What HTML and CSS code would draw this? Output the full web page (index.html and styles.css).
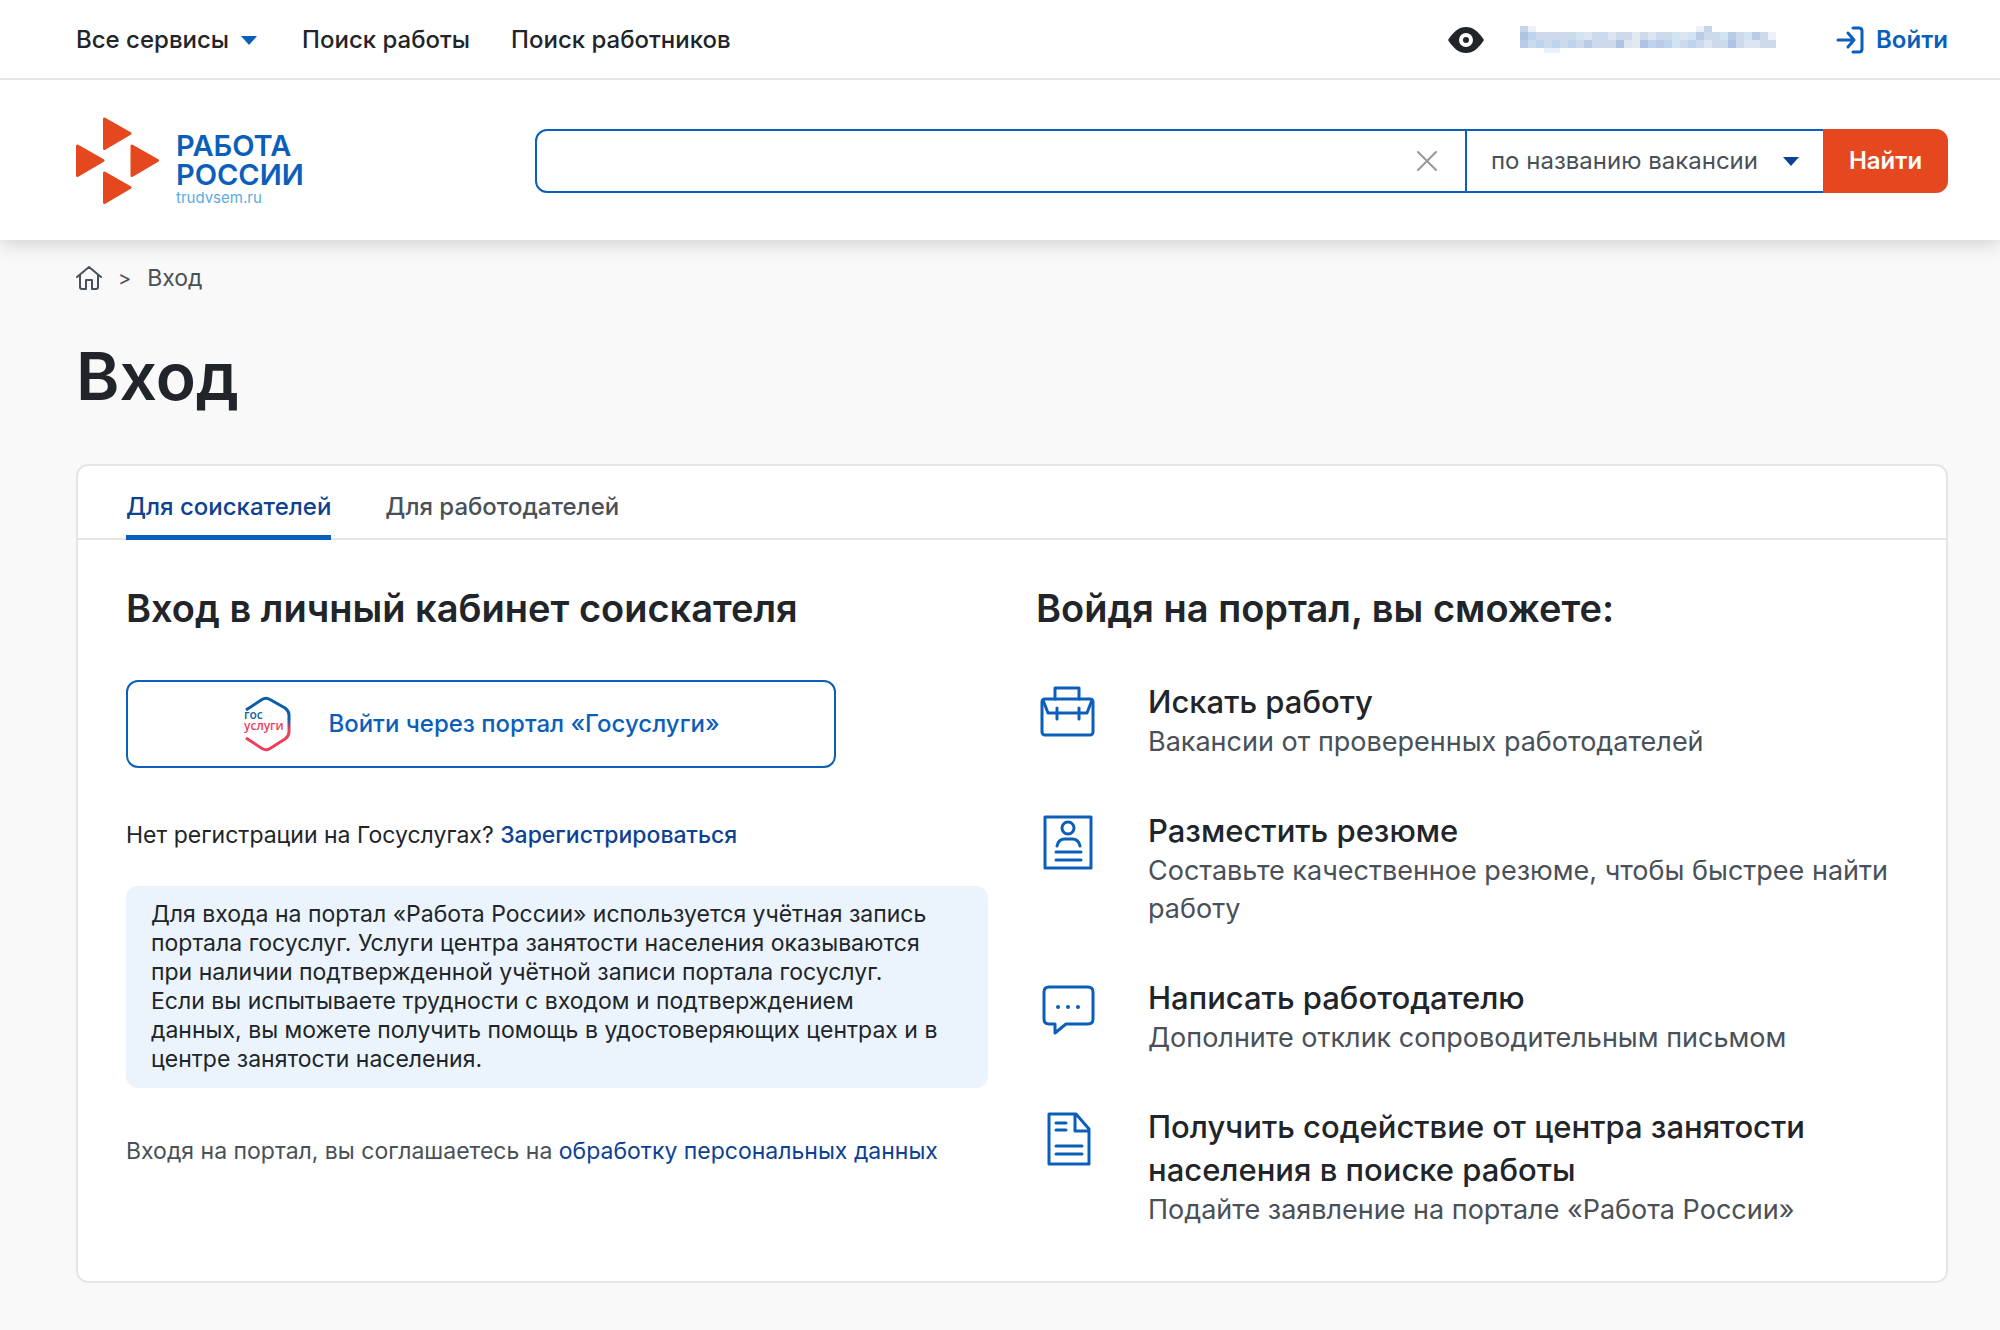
FILE: index.html
```
<!DOCTYPE html>
<html lang="ru">
<head>
<meta charset="utf-8">
<meta name="viewport" content="width=device-width, initial-scale=1">
<title>Вход — Работа России</title>
<link rel="stylesheet" href="styles.css">
</head>
<body>
<header class="header">
  <div class="topbar">
    <nav class="nav">
      <button class="nav-link nav-menu" type="button">Все сервисы
        <svg width="16" height="9" viewBox="0 0 16 9" aria-hidden="true"><path d="M0 0h16L8 9z" fill="#0b5fba"/></svg>
      </button>
      <a class="nav-link" href="#">Поиск работы</a>
      <a class="nav-link" href="#">Поиск работников</a>
    </nav>
    <div class="user">
      <button class="eye" type="button" aria-label="Версия для слабовидящих">
        <svg width="36" height="26" viewBox="0 0 36 26"><path d="M0 13C6 4 11 0 18 0s12 4 18 13c-6 9-11 13-18 13S6 22 0 13z" fill="#212529"/><circle cx="18" cy="13" r="5" fill="#212529" stroke="#fff" stroke-width="4"/></svg>
      </button>
      <a class="region" href="#" aria-label="Регион">
        <svg width="256" height="28" viewBox="0 0 256 28" shape-rendering="crispEdges">
          <path fill="#c5d5eb" d="M0 0h8v6H0zM184 0h8v6h-8z"/>
          <path fill="#ebf1f9" d="M8 0h8v6H8zM24 22h16v5H24zM176 0h8v6h-8z"/>
          <path fill="#cddaec" d="M0 6h256v16H0z"/>
          <path fill="#adc4e3" d="M0 6h8v8H0zM96 14h8v8h-8zM120 14h8v8h-8zM208 14h8v8h-8z"/>
          <path fill="#b8cce8" d="M0 14h8v8H0zM64 14h8v8h-8zM136 14h8v8h-8zM176 6h8v8h-8zM232 6h8v8h-8zM208 6h8v8h-8z"/>
          <path fill="#bdd4ee" d="M8 6h8v8H8zM16 14h8v8h-8zM32 14h8v8h-8zM48 14h8v8h-8zM128 14h8v8h-8zM168 14h8v8h-8zM144 14h8v8h-8z"/>
          <path fill="#dde4f2" d="M64 6h8v8h-8zM88 6h8v8h-8zM128 6h8v8h-8zM160 6h8v8h-8zM104 14h8v8h-8zM184 14h8v8h-8zM224 14h16v8h-16z"/>
          <path fill="#d1e4f2" d="M56 6h8v8h-8zM152 6h8v16h-8zM168 6h8v8h-8zM200 6h8v8h-8zM224 6h8v8h-8z"/>
          <path fill="#e2e9f1" d="M112 6h8v16h-8z"/>
          <path fill="#edf2fa" d="M248 6h8v8h-8z"/>
        </svg>
      </a>
      <a class="login" href="#">
        <svg width="28" height="28" viewBox="0 0 28 28" fill="none" stroke="#0b5fba" stroke-width="3" stroke-linecap="round" stroke-linejoin="round" aria-hidden="true"><path d="M2 14h16M12 7l6 7-6 7M17 2h6q3 0 3 3v18q0 3-3 3h-6"/></svg>
        Войти
      </a>
    </div>
  </div>
  <div class="mainbar">
    <a class="logo" href="#">
      <svg width="84" height="88" viewBox="0 0 84 88" fill="#e5481f" stroke="#e5481f" stroke-width="3" stroke-linejoin="round" aria-hidden="true">
        <path d="M28.500 2v29.500L54 16.500zM1.500 29v29.500L27 43.500zM56 29v29.500L81.500 43.500zM28.500 56v29.500L54 70.500z"/>
      </svg>
      <span class="logo-text">
        <span class="logo-name">РАБОТА<br>РОССИИ</span>
        <span class="logo-site">trudvsem.ru</span>
      </span>
    </a>
    <form class="search">
      <div class="search-field">
        <input class="search-input" type="text" aria-label="Поисковый запрос">
        <button class="search-clear" type="reset" aria-label="Очистить">
          <svg width="20" height="20" viewBox="0 0 20 20" stroke="#95999c" stroke-width="2" stroke-linecap="round"><path d="M1 1l18 18M19 1L1 19"/></svg>
        </button>
      </div>
      <div class="search-kind">
        <select class="search-select" aria-label="Где искать"><option>по названию вакансии</option></select>
        <svg class="search-arrow" width="16" height="9" viewBox="0 0 16 9" aria-hidden="true"><path d="M0 0h16L8 9z" fill="#0d4193"/></svg>
      </div>
      <button class="search-submit" type="submit">Найти</button>
    </form>
  </div>
</header>

<main class="page">
  <nav class="crumbs" aria-label="Навигация">
    <a class="crumb-home" href="#" aria-label="Главная">
      <svg width="26" height="26" viewBox="0 0 26 26" fill="none" stroke="#495057" stroke-width="2" stroke-linejoin="round" stroke-linecap="round"><path d="M1 12L13 2l12 10M4 10v12q0 2 2 2h4v-9h6v9h4q2 0 2-2V10"/></svg>
    </a>
    <span class="crumb-sep">&gt;</span>
    <span>Вход</span>
  </nav>
  <h1 class="title">Вход</h1>

  <section class="card">
    <div class="tabs" role="tablist">
      <button class="tab tab-active" type="button" role="tab" aria-selected="true">Для соискателей</button>
      <button class="tab" type="button" role="tab" aria-selected="false">Для работодателей</button>
    </div>
    <div class="columns">
      <div>
        <h2 class="subtitle">Вход в личный кабинет соискателя</h2>
        <button class="gos" type="button">
          <svg width="50" height="56" viewBox="0 0 50 56" aria-hidden="true">
            <defs><linearGradient id="gos-edge" x1="0" y1="0" x2="0" y2="56" gradientUnits="userSpaceOnUse"><stop offset=".4" stop-color="#0b5fa8"/><stop offset=".62" stop-color="#ee3f58"/></linearGradient></defs>
            <path d="M4 14L20 3.500q4-2.500 8 0L43 12q4 3 4 7v17q0 4-4 7L28 52.500q-4 2.500-8 0L4 42" fill="none" stroke="url(#gos-edge)" stroke-width="3"/>
            <text class="gos-mark" x="2" y="23" fill="#0b5fa8">гос</text>
            <text class="gos-mark" x="2" y="34" fill="#ee3f58">услуги</text>
          </svg>
          Войти через портал «Госуслуги»
        </button>
        <p class="register">Нет регистрации на Госуслугах? <a class="link link-strong" href="#">Зарегистрироваться</a></p>
        <p class="notice">Для входа на портал «Работа России» используется учётная запись портала госуслуг. Услуги центра занятости населения оказываются при наличии подтвержденной учётной записи портала госуслуг. Если&nbsp;вы испытываете трудности с входом и подтверждением данных,&nbsp;вы можете получить помощь в удостоверяющих центрах и в центре занятости населения.</p>
        <p class="consent">Входя на портал, вы соглашаетесь на <a class="link" href="#">обработку персональных данных</a></p>
      </div>
      <div>
        <h2 class="subtitle">Войдя на портал, вы сможете:</h2>
        <ul class="benefits">
          <li class="benefit">
            <svg class="icon" viewBox="0 0 64 64" aria-hidden="true"><rect x="6" y="19" width="51" height="36" rx="3"/><path d="M19 19V8h24v11M7 20l5 13h39l5-13M21 28v11M43 28v11"/></svg>
            <div><h3 class="benefit-title">Искать работу</h3><p class="benefit-text">Вакансии от проверенных работодателей</p></div>
          </li>
          <li class="benefit">
            <svg class="icon" viewBox="0 0 64 64" aria-hidden="true"><rect x="9" y="8" width="46" height="51"/><circle cx="32" cy="19" r="6"/><path d="M21 37c1-5 4-7 8-7h7c4 0 7 2 8 7M20 43h25M20 51h25"/></svg>
            <div><h3 class="benefit-title">Разместить резюме</h3><p class="benefit-text">Составьте качественное резюме, чтобы быстрее найти работу</p></div>
          </li>
          <li class="benefit">
            <svg class="icon" viewBox="0 0 64 64" aria-hidden="true"><path d="M13 11h39q5 0 5 5v27q0 5-5 5H30l-11 9v-9h-6q-5 0-5-5V16q0-5 5-5z"/><g fill="#0b5fba" stroke="none"><circle cx="22" cy="31" r="2"/><circle cx="32" cy="31" r="2"/><circle cx="42" cy="31" r="2"/></g></svg>
            <div><h3 class="benefit-title">Написать работодателю</h3><p class="benefit-text">Дополните отклик сопроводительным письмом</p></div>
          </li>
          <li class="benefit">
            <svg class="icon" viewBox="0 0 64 64" aria-hidden="true"><path d="M13 9h27l13 15v35H13zM39 9v17h14M20 18h10M20 25h10M20 41h26M20 49h26"/></svg>
            <div><h3 class="benefit-title">Получить содействие от центра занятости населения в поиске работы</h3><p class="benefit-text">Подайте заявление на портале «Работа России»</p></div>
          </li>
        </ul>
      </div>
    </div>
  </section>
</main>
</body>
</html>
```
FILE: styles.css
```
* { box-sizing: border-box; }

body {
  margin: 0;
  background: #f9f9f9;
  color: #212529;
  font: 400 23px/30px Inter, "Liberation Sans", sans-serif;
}

h1, h2, h3, p, ul { margin: 0; padding: 0; }
ul { list-style: none; }
svg { display: block; flex: none; }
a { color: inherit; text-decoration: none; }

button, input, select {
  margin: 0;
  padding: 0;
  border: 0;
  background: none;
  color: inherit;
  font: inherit;
}

button { cursor: pointer; }

/* Header */
.header {
  position: relative;
  background: #fff;
  box-shadow: 0 3px 20px rgba(0, 0, 0, .18);
}

.topbar {
  display: flex;
  align-items: center;
  justify-content: space-between;
  height: 80px;
  padding: 2px 52px 0 76px;
  border-bottom: 2px solid #e6e6e6;
}

.nav { display: flex; gap: 41px; }
.nav-link { font-size: 24px; font-weight: 500; }
.nav-menu { display: flex; align-items: center; gap: 12px; margin-right: 4px; }

.user { display: flex; align-items: center; }
.eye { margin-right: 36px; }
.region { margin-right: 60px; }

.login {
  display: flex;
  align-items: center;
  gap: 12px;
  color: #0b5fba;
  font-size: 24px;
  font-weight: 600;
}

.mainbar {
  display: grid;
  grid-template-columns: 459px 1fr;
  align-items: center;
  height: 160px;
  padding: 2px 52px 0 76px;
}

.logo { display: flex; align-items: center; gap: 16px; }
.logo-text { display: flex; flex-direction: column; padding-top: 16px; }
.logo-name { color: #0b5fba; font-size: 29px; font-weight: 600; line-height: 29px; }
.logo-site { color: #5aabe4; font-size: 15px; line-height: 18px; }

.search { display: flex; height: 64px; }

.search-field {
  display: flex;
  flex: 1;
  border: 2px solid #0b5fba;
  border-radius: 12px 0 0 12px;
}

.search-input { flex: 1; min-width: 0; padding: 0 20px; outline: 0; }
.search-clear { padding: 0 28px; }

.search-kind {
  display: grid;
  align-items: center;
  width: 356px;
  border: solid #0b5fba;
  border-width: 2px 0;
}

.search-select {
  grid-area: 1 / 1;
  height: 100%;
  padding-left: 24px;
  appearance: none;
  outline: 0;
  color: #495057;
  font-size: 24px;
}

.search-arrow { grid-area: 1 / 1; justify-self: end; margin-right: 24px; pointer-events: none; }

.search-submit {
  width: 125px;
  border-radius: 0 12px 12px 0;
  background: #e5481f;
  color: #fff;
  font-size: 24px;
  font-weight: 600;
}

/* Page */
.page { padding: 23px 52px 48px 76px; }

.crumbs { display: flex; align-items: center; gap: 16px; color: #495057; }
.crumb-sep { font-size: 20px; }

.title {
  margin: 43px 0 48px;
  font-size: 66px;
  font-weight: 600;
  line-height: 80px;
}

.card {
  border: 2px solid #e6e6e6;
  border-radius: 12px;
  background: #fff;
}

.tabs {
  display: flex;
  align-items: flex-end;
  gap: 54px;
  height: 74px;
  padding: 0 48px;
  border-bottom: 2px solid #e6e6e6;
}

.tab {
  height: 60px;
  margin-bottom: -2px;
  padding-bottom: 2px;
  border-bottom: 5px solid transparent;
  color: #495057;
  font-size: 24px;
  font-weight: 500;
}

.tab-active { border-color: #0b5fba; color: #0d4193; }

.columns {
  display: grid;
  grid-template-columns: 1fr 1fr;
  gap: 48px;
  padding: 46px 48px 52px;
}

.subtitle { margin-bottom: 50px; font-size: 38px; font-weight: 600; line-height: 44px; }

.gos {
  display: flex;
  align-items: center;
  justify-content: center;
  gap: 36px;
  width: 100%;
  max-width: 710px;
  height: 88px;
  border: 2px solid #0b5fba;
  border-radius: 12px;
  color: #0b5fba;
  font-size: 24px;
  font-weight: 500;
}

.gos-mark { font: 600 12px "Open Sans", sans-serif; }

.register { margin-top: 52px; }
.link { color: #0d4193; }
.link-strong { font-weight: 500; }

.notice {
  margin-top: 36px;
  padding: 14px 25px;
  border-radius: 12px;
  background: #ebf4fc;
  line-height: 29px;
}

.consent { margin-top: 48px; color: #495057; }

.benefits { display: grid; gap: 48px; }
.benefit { display: flex; gap: 48px; }

.icon {
  width: 64px;
  height: 64px;
  fill: none;
  stroke: #0b5fba;
  stroke-width: 3;
  stroke-linecap: round;
  stroke-linejoin: round;
}

.benefit-title { font-size: 31px; font-weight: 500; line-height: 43px; }
.benefit-text { color: #495057; font-size: 27px; line-height: 38px; }
```
